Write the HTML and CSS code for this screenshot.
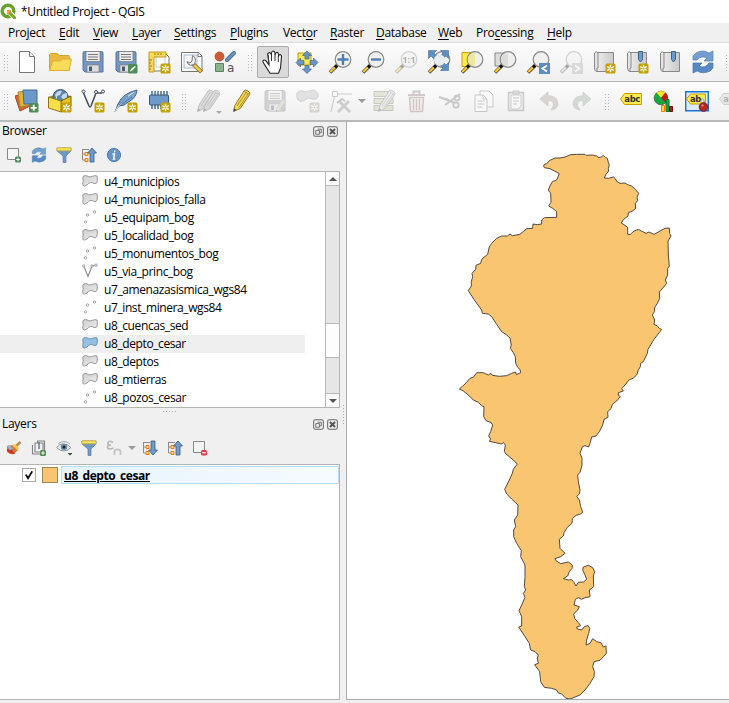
FILE: index.html
```html
<!DOCTYPE html>
<html lang="en">
<head>
<meta charset="utf-8">
<title>*Untitled Project - QGIS</title>
<link rel="stylesheet" href="styles.css">
</head>
<body>
<svg class="defs" width="0" height="0" aria-hidden="true">
  <defs>
    <linearGradient id="grey" x2="1" y2="1"><stop stop-color="#cfcfcf"/><stop offset="1" stop-color="#ededed"/></linearGradient>
    <linearGradient id="book" x2="1"><stop stop-color="#ededed"/><stop offset="1" stop-color="#c9c9c9"/></linearGradient>
    <symbol id="star" viewBox="0 0 11 11"><rect x=".5" y=".5" width="10" height="10" rx="1.500" fill="#c4a000"/><path d="M5.500 1.800v7.400M2.300 3.600l6.400 3.800M8.700 3.600L2.300 7.400" stroke="#fff" stroke-width="1.300"/><circle cx="5.500" cy="5.500" r="1" fill="#c4a000"/></symbol>
    <symbol id="lens" viewBox="0 0 24 24"><path d="M2 22.500l7-7" stroke="#444" stroke-width="3.600"/><path d="M2.300 22l5-5" stroke="#fcc92c" stroke-width="2.200"/><path d="M7 17.500l2.500-2.500" stroke="#111" stroke-width="3"/><circle cx="15" cy="9.500" r="7.800" fill="#eeeeec" fill-opacity=".9" stroke="#888a85" stroke-width="1.200"/></symbol>
    <symbol id="poly" viewBox="0 0 16 12"><path d="M.8 2Q1.500.5 3.500.6 5 .7 6.500 1.600q2 .6 4-.3 3-1.200 4.500-.3.800 3 0 6-.3 2-3 1.500-2-1.500-3.500-1-2 .5-3.500 2.500Q2 12 1 10.500.3 9 1.200 6 1 4 .8 2z" fill="url(#grey)" stroke="#999" stroke-width="1"/></symbol>
    <symbol id="polyb" viewBox="0 0 16 12"><path d="M.8 2Q1.500.5 3.500.6 5 .7 6.500 1.600q2 .6 4-.3 3-1.200 4.500-.3.800 3 0 6-.3 2-3 1.500-2-1.500-3.500-1-2 .5-3.500 2.500Q2 12 1 10.500.3 9 1.200 6 1 4 .8 2z" fill="#93bfe0" stroke="#6b93b5" stroke-width="1"/></symbol>
    <symbol id="pts" viewBox="0 0 16 16"><g fill="#fff" stroke="#999" stroke-width=".9"><circle cx="3.500" cy="12.800" r="1.200"/><circle cx="5.500" cy="6" r="1.200"/><circle cx="12.500" cy="3" r="1.200"/></g></symbol>
    <symbol id="line" viewBox="0 0 16 16"><path d="M2 3.500l4 10 4-10.500 4-.5" fill="none" stroke="#888" stroke-width="1.100"/><g fill="#fff" stroke="#888" stroke-width=".8"><circle cx="1.700" cy="3" r="1.200"/><circle cx="10" cy="3" r="1.200"/><circle cx="14" cy="2.200" r="1.200"/></g></symbol>
    <symbol id="reload" viewBox="0 0 24 24"><path d="M2 10V6l3-3q7-4 13 0l4-2v10h-9l3-3q-6-3-10 2z" fill="#729fcf" stroke="#5683b8" stroke-width=".7"/><path d="M22 13v5l-3 3q-7 3.500-13 0l-4 2V13h9l-3 3q6 3 10-3z" fill="#5888c2" stroke="#4676ac" stroke-width=".7"/></symbol>
    <symbol id="filter" viewBox="0 0 16 16"><path d="M1 1h14v3l-5 5v6.500H7V9L1 4z" fill="#6d97c4" stroke="#5c7fa5" stroke-width=".7"/><path d="M1 .8h14v3H1z" fill="#f5e45a" stroke="#c9ac2c" stroke-width=".7"/></symbol>
    <symbol id="tree" viewBox="0 0 16 16"><path d="M1 2.500h7M1.500 2v11h3M1.500 7h3" fill="none" stroke="#8a8a8a"/><path d="M4 5.500h3v3H4zM4 11.500h3v3H4z" fill="#ffd9a0" stroke="#f57900"/></symbol>
    <symbol id="float" viewBox="0 0 12 12"><rect x=".7" y=".7" width="10.600" height="10.600" rx="2" fill="none" stroke="#666" stroke-width="1.100"/><path d="M5 3.500h4v4H7.500M3 5h4v4H3z" fill="none" stroke="#666"/></symbol>
    <symbol id="close" viewBox="0 0 12 12"><rect x=".7" y=".7" width="10.600" height="10.600" rx="2" fill="none" stroke="#666" stroke-width="1.100"/><path d="M3.200 3.200l5.600 5.600M8.800 3.200L3.200 8.800" stroke="#555" stroke-width="2.200"/></symbol>
    <symbol id="bookbase" viewBox="0 0 24 24"><path d="M4.500 2.500h17v19h-17z" fill="url(#book)" stroke="#888"/><path d="M2.500 3Q4 .5 6 3v15H5v3.500q-2.500 0-2.500-3.500z" fill="#e4e4e4" stroke="#888"/></symbol>
    <symbol id="floppy" viewBox="0 0 24 24"><path d="M2 3q0-1.500 1.500-1.500h17Q22 1.500 22 3v19H4l-2-2z" fill="#7198c3" stroke="#55779c"/><path d="M5 1.500h14v10H5z" fill="#eee" stroke="#777" stroke-width=".7"/><path d="M7 4.500h10M7 7h10M7 9.500h10" stroke="#777"/><path d="M6 15h12v7H6z" fill="#ddd" stroke="#777" stroke-width=".6"/><path d="M8 16.500h3V21H8z" fill="#4a5b70"/></symbol>
    <symbol id="pencil" viewBox="0 0 24 24"><path d="M3.500 22.500l1.300-6L14 2q1-1.500 3-.5l2 1.200q1.500 1.300.7 2.800l-9.500 14z" fill="#f4d94e" stroke="#92772f"/><path d="M14.500 2.500l5 3M7 17L16 3.500M9 18.500L18 5" stroke="#a98b2e"/><path d="M3.500 22.500l.8-3 2 1.300z" fill="#333"/></symbol>
  </defs>
</svg>

<header class="titlebar">
  <svg width="17" height="17" viewBox="0 0 17 17"><circle cx="8" cy="8" r="5.800" fill="none" stroke="#6aa22b" stroke-width="3.600"/><path d="M8.500 8.500l6 6" stroke="#fff" stroke-width="5"/><path d="M7 7h4v2l5 5v2h-2.500L9 11.500H7z" fill="#78a82c"/><path d="M7 7h4l-2 4H7z" fill="#f39a33"/></svg>
  <span>*Untitled Project - QGIS</span>
</header>

<nav class="menubar">
  <span>Pro<u>j</u>ect</span><span><u>E</u>dit</span><span><u>V</u>iew</span><span><u>L</u>ayer</span><span><u>S</u>ettings</span><span><u>P</u>lugins</span><span>Vect<u>o</u>r</span><span><u>R</u>aster</span><span><u>D</u>atabase</span><span><u>W</u>eb</span><span>Pro<u>c</u>essing</span><span><u>H</u>elp</span>
</nav>

<section class="toolbar">
  <i class="grip"></i>
  <button><svg viewBox="0 0 24 24"><path d="M4.500 1.500h10l5 5v16h-15z" fill="#fff" stroke="#777"/><path d="M14.500 1.500v5h5" fill="#eee" stroke="#777"/></svg></button>
  <button><svg viewBox="0 0 24 24"><path d="M1.500 20V5q0-1 1-1.500h7l2 2h9q1 0 1 1V20z" fill="#e9b93e" stroke="#d4a430"/><path d="M1.500 20.500l3-9.500h8l2-2h9l-2.500 11.500z" fill="#fddb5a" stroke="#dcae35"/></svg></button>
  <button><svg viewBox="0 0 24 24"><use href="#floppy"/></svg></button>
  <button><svg viewBox="0 0 24 24"><use href="#floppy"/><rect x="14" y="14" width="9.500" height="9.500" rx="1.500" fill="#508b59"/><path d="M16 21.500l1-2.500 4-3 .8.800-3.500 3.800z" fill="#fff"/></svg></button>
  <button><svg viewBox="0 0 24 24"><path d="M5 3h13l4 4v14H5z" fill="#fff" stroke="#777"/><path d="M9 6h9v11H9z" fill="none" stroke="#bcd"/><path d="M2 2h17v5H7v15H2z" fill="#f7da59" stroke="#c09b20"/><path d="M2 10h3M2 13h2M2 16h3M2 19h2M8 5V3M11 5V3M14 5V3" stroke="#a67c00"/><use href="#star" x="13" y="13" width="11" height="11"/></svg></button>
  <button><svg viewBox="0 0 24 24"><path d="M1.500 2.500h17l3.500 3.500v15.500H1.500z" fill="#fff" stroke="#777"/><path d="M4 5h13v13H4z" fill="#f5f8fd" stroke="#a9bad0"/><path d="M18 3v3.500h4" fill="none" stroke="#777"/><path d="M12 13l9.500 9" stroke="#836b31" stroke-width="4.200"/><path d="M14 15l7 6.500" stroke="#f1cd46" stroke-width="2.500"/><path d="M12.500 5.500q3 1 3 5l-1 4-4 .8q-3-.5-3.500-3.800l3 1.500 2-2z" fill="#eee" stroke="#777"/></svg></button>
  <button><svg viewBox="0 0 24 24"><circle cx="6.500" cy="6.500" r="4.500" fill="#cf5a36" stroke="#9e4528" stroke-width=".7"/><path d="M14 10l7-7" stroke="#486b92" stroke-width="4" stroke-linecap="round"/><path d="M14 10l7-7" stroke="#6994c0" stroke-width="2.400" stroke-linecap="round"/><path d="M2.500 13.500h8v8h-8z" fill="#8db28e" stroke="#5d8060"/><text x="14" y="22" class="glyph">a</text></svg></button>
  <i class="grip"></i>
  <button class="pressed"><svg viewBox="0 0 24 24"><path d="M8 15L5 11q-2-1.700-3-.3-.5 1 1 3l4.500 7 1.500 2.500h8.500l2-5 1-12q-.5-2-2-1.500-1 .3-1 2V4q-.5-2-2-1.500T14 5V3q-.5-2.200-2-2t-1.500 2.500L10 4Q9 2 7.500 3T7 5z" fill="#fff" stroke="#222" stroke-width="1.100"/><path d="M7 5l1 9M10.500 4v7M14 4v7M17.300 6v6" stroke="#333" fill="none"/></svg></button>
  <button><svg viewBox="0 0 24 24"><path d="M3 3h13v12H3z" fill="#fce94f" stroke="#c4a000"/><g fill="#6895c5" stroke="#3d6895" stroke-width=".7"><path d="M12 1l4.500 4.500H14V9h-4V5.500H7.500zM12 23.500L7.500 19H10v-3.500h4V19h2.500zM1 12.500L5.500 8v2.500H9v4H5.500V17zM23 12.500L18.500 17v-2.500H15v-4h3.500V8z"/></g></svg></button>
  <button><svg viewBox="0 0 24 24"><use href="#lens"/><path d="M15 4v11M9.500 9.500h11" stroke="#4d7fb5" stroke-width="2.400"/></svg></button>
  <button><svg viewBox="0 0 24 24"><use href="#lens"/><path d="M10 9.500h10" stroke="#4d7fb5" stroke-width="2.400"/></svg></button>
  <button class="off"><svg viewBox="0 0 24 24"><use href="#lens"/><text x="8.200" y="13" class="one">1:1</text></svg></button>
  <button><svg viewBox="0 0 24 24"><use href="#lens"/><g fill="#5f8fc2" stroke="#456f9d" stroke-width=".6"><path d="M1.500.5h8L7 3l3 3-3 3-3-3-2.500 2.500zM21.500.5h-8L16 3l-2.500 3 2.500 3 3-3 2.500 2.500zM21.500 20.500h-8L16 18l-3-3 3-3 3 3 2.500-2.500z"/></g><circle cx="12.500" cy="10" r="5.500" fill="#e9ecef"/></svg></button>
  <button><svg viewBox="0 0 24 24"><path d="M2 2.500h11v14H2z" fill="#fce94f" stroke="#c4a000"/><use href="#lens"/><path d="M15 3.200v13q-6-.2-7-5t3-7z" fill="#efe7a0"/></svg></button>
  <button><svg viewBox="0 0 24 24"><path d="M2 3h11v13H2z" fill="#ddd" stroke="#888"/><use href="#lens"/><path d="M15 3.200v13q-6-.2-7-5t3-7z" fill="#ddd"/></svg></button>
  <button><svg viewBox="0 0 24 24"><use href="#lens"/><path d="M13 13h11v11H13z" fill="#5c8dbe"/><path d="M21 15.500l-4.500 3 4.500 3" fill="none" stroke="#fff" stroke-width="1.800"/></svg></button>
  <button class="off"><svg viewBox="0 0 24 24"><use href="#lens" class="sat0"/><path d="M13 13h11v11H13z" fill="#aaa"/><path d="M16 15.500l4.500 3-4.500 3" fill="none" stroke="#fff" stroke-width="1.800"/></svg></button>
  <button><svg viewBox="0 0 24 24"><use href="#bookbase"/><use href="#star" x="13" y="13" width="11" height="11"/></svg></button>
  <button><svg viewBox="0 0 24 24"><use href="#bookbase"/><path d="M13.500 1.500h4v8l-2 2.500-2-2.500z" fill="#6f9bcb" stroke="#38658f"/><use href="#star" x="13" y="13" width="11" height="11"/></svg></button>
  <button><svg viewBox="0 0 24 24"><use href="#bookbase"/><path d="M13.500 1.500h4v8l-2 2.500-2-2.500z" fill="#6f9bcb" stroke="#38658f"/></svg></button>
  <button><svg viewBox="0 0 24 24"><use href="#reload"/></svg></button>
  <i class="grip"></i>
</section>

<section class="toolbar second">
  <i class="grip"></i>
  <button><svg viewBox="0 0 24 24"><path d="M0 7l11-3 4 13-10 5z" fill="#d56630" stroke="#a4481d"/><path d="M3 3l12-1 2 14-12 2z" fill="#e3b32f" stroke="#a88428"/><path d="M8 1h14v14H9z" fill="#6b98c8" stroke="#426d99"/><rect x="14" y="14" width="9.500" height="9.500" rx="1.500" fill="#508b59"/><path d="M18.700 15.800v6M15.700 18.800h6" stroke="#fff" stroke-width="1.700"/></svg></button>
  <button><svg viewBox="0 0 24 24"><path d="M0 8l10-3 13 2-8 6z" fill="#a88c14"/><circle cx="12.500" cy="8" r="7.500" fill="#5e85ae" stroke="#3c5878"/><path d="M7 6q3-5 7-4l-2 4-3 1v4zM15 5l4-1v5l-3 2-3-3z" fill="#c8dae9"/><path d="M13 12l10-5v10l-10 6z" fill="#e5c51f" stroke="#725d00"/><path d="M.5 8L13 12v11L.5 19z" fill="#f9de4b" stroke="#8e7616"/><use href="#star" x="13" y="13" width="11" height="11"/></svg></button>
  <button><svg viewBox="0 0 24 24"><path d="M2.500 4l5.500 13q1 2 2 0L15 4h6" fill="none" stroke="#3c4c5c" stroke-width="1.500"/><g fill="#fff" stroke="#3c4c5c"><circle cx="2.500" cy="2.500" r="1.500"/><circle cx="15" cy="3" r="1.500"/><circle cx="22" cy="2.500" r="1.500"/></g><use href="#star" x="13" y="13" width="11" height="11"/></svg></button>
  <button><svg viewBox="0 0 24 24"><path d="M1 23l3-8Q9 4 23 1q-.5 7-7 11l-6 4-5 1z" fill="#7aa5d2" stroke="#42648a"/><path d="M1 23Q6 12 20 3" fill="none" stroke="#e2edf7"/><path d="M5 16l9-9M8 15l10-7" stroke="#466f9b" stroke-width=".8"/><use href="#star" x="13" y="13" width="11" height="11"/></svg></button>
  <button><svg viewBox="0 0 24 24"><path d="M5 2v18M8 2v18M11 2v18M14 2v18M17 2v18M20 2v18" stroke="#34587b" stroke-width="1.300"/><rect x="2.500" y="6" width="19" height="10" rx="1" fill="#6d9aca" stroke="#34587b"/><use href="#star" x="13" y="13" width="11" height="11"/></svg></button>
  <i class="grip wide"></i>
  <button class="off grey"><svg viewBox="0 0 24 24"><g class="solid"><use href="#pencil" x="-3"/><use href="#pencil" x="3"/></g></svg><b class="tick"></b></button>
  <button><svg viewBox="0 0 24 24"><use href="#pencil"/></svg></button>
  <button class="off grey"><svg viewBox="0 0 24 24"><use href="#floppy"/><use href="#pencil" x="11" y="9" width="14" height="15"/></svg></button>
  <button class="off grey"><svg viewBox="0 0 24 24"><path d="M1 4q2-4 8-1 3-1 8-2 6 2 5 7-1 3-6 2-4-2-6 0-4 4-8 1-2-3-1-7z" fill="#bbb" stroke="#888"/><use href="#star" x="13" y="13" width="11" height="11"/></svg></button>
  <button class="off grey"><svg viewBox="0 0 24 24"><path d="M2 23L6 5h17" fill="none" stroke="#777"/><path d="M3.500 2.500h5v5h-5z" fill="#fff" stroke="#777"/><path d="M9 23l11-11M10 12l11 11" stroke="#888" stroke-width="3"/><path d="M8 14l5-4 3 2" fill="none" stroke="#777" stroke-width="2"/></svg></button>
  <i class="drop"></i>
  <button class="off"><svg viewBox="0 0 24 24"><path d="M2 2.500h19v5H2zM2 9.500h19v5H2zM2 16.500h19v5H2z" fill="#c7c79d" stroke="#76765c"/><use href="#pencil" x="3" y="0" class="sat0"/></svg></button>
  <button class="off"><svg viewBox="0 0 24 24"><path d="M3 6h17M8.500 5V2.500h6V5" fill="none" stroke="#927070" stroke-width="2"/><path d="M4.500 8.500h14l-1 14h-12z" fill="#eee0dc" stroke="#927070" stroke-width="1.500"/><path d="M8.500 10v11M11.500 10v11M14.500 10v11" stroke="#927070" stroke-width="1.300"/></svg></button>
  <button class="off"><svg viewBox="0 0 24 24"><path d="M1 8l16 6M7 16L22 5M1 8l10 3" fill="none" stroke="#777" stroke-width="2"/><circle cx="19" cy="9" r="2.500" fill="none" stroke="#777" stroke-width="1.800"/><circle cx="18" cy="16" r="2.700" fill="none" stroke="#777" stroke-width="1.800"/></svg></button>
  <button class="off"><svg viewBox="0 0 24 24"><path d="M9 2h9l4 4v12H9z" fill="#fff" stroke="#777"/><path d="M4 6h8l4 4v12.500H4z" fill="#fff" stroke="#777"/><path d="M12 6v4h4M6.500 12h7M6.500 15h7M6.500 18h5" fill="none" stroke="#777"/></svg></button>
  <button class="off"><svg viewBox="0 0 24 24"><path d="M4.500 3.500h15v18h-15z" fill="#ddd" stroke="#777" stroke-width="1.400"/><path d="M7 6h10v11l-3 3H7z" fill="#fff" stroke="#888"/><path d="M9 2h6v3H9z" fill="#aaa" stroke="#777"/><path d="M9 9h6M9 12h6M9 15h4" stroke="#777"/></svg></button>
  <button class="off"><svg viewBox="0 0 24 24"><path d="M3 10l8-7v4q9-1 10 8-.5 5-7 6 4-5 2-8-2-2-5-1.500V17z" fill="#a69989" stroke="#887e70" stroke-width=".8"/></svg></button>
  <button class="off"><svg viewBox="0 0 24 24"><path d="M21 10l-8-7v4q-9-1-10 8 .5 5 7 6-4-5-2-8 2-2 5-1.500V17z" fill="#97a69a" stroke="#788a7b" stroke-width=".8"/></svg></button>
  <i class="grip narrow"></i>
  <button><svg viewBox="0 0 24 24"><path d="M1.500 10l4-5.500h17v11h-17z" fill="#fce94f" stroke="#c4a000"/><text x="5.300" y="13" class="abc">abc</text></svg></button>
  <button><svg viewBox="0 0 24 24"><circle cx="9" cy="9" r="6.800" fill="#0faa42" stroke="#3d3b20" stroke-width=".6"/><path d="M9 9L4.500 3.500Q9 .5 13.500 3.500z" fill="#fce51b"/><path d="M9 9l4.500-5.500q4 5 .5 10.500z" fill="#c81919"/><path d="M9.500 16.500h3v6h-3z" fill="#fce51b" stroke="#f57900"/><path d="M14 10.500h3v12h-3z" fill="#16a34a" stroke="#087b2b"/><path d="M17.500 17.500h3v5h-3z" fill="#b61a1a" stroke="#750b0b"/></svg></button>
  <button><svg viewBox="0 0 24 24"><path d="M.7 2.700h22.600v19H.7z" fill="#dcebfa" stroke="#1a73d8" stroke-width="1.400"/><path d="M1.500 10l4-5h15v10h-15z" fill="#fce94f" stroke="#c4a000"/><text x="5" y="13" class="abc">ab</text><path d="M16 18v-7q1-2 3 0v7" fill="#eee" stroke="#999"/><circle cx="18.500" cy="18" r="4.300" fill="#b42828" stroke="#7c1616"/><circle cx="17.500" cy="16.500" r="1.200" fill="#d77"/></svg></button>
  <button class="off"><svg viewBox="0 0 24 24"><path d="M1.500 10l4-5.500h17v11h-17z" fill="#ccc" stroke="#888"/><text x="5.300" y="13" class="abc">ab</text></svg></button>
</section>

<main class="workspace">
  <div class="docks">
    <section class="dock browser">
      <h2 class="dock-title"><span>Browser</span><svg viewBox="0 0 12 12"><use href="#float"/></svg><svg viewBox="0 0 12 12"><use href="#close"/></svg></h2>
      <div class="dock-tools">
        <svg viewBox="0 0 16 16"><path d="M1.500 1.500h11v11h-11z" fill="#f6f6f6" stroke="#888"/><rect x="9" y="9.500" width="6" height="6" rx="1.500" fill="#508b59"/><path d="M12 10.700v3.600M10.200 12.500h3.600" stroke="#fff"/></svg>
        <svg viewBox="0 0 24 24"><use href="#reload"/></svg>
        <svg viewBox="0 0 16 16"><use href="#filter"/></svg>
        <svg viewBox="0 0 16 16"><use href="#tree"/><path d="M11 1l4.500 5H13v9H9V6H6.500z" fill="#6f9aca" stroke="#345c86" stroke-width=".8"/></svg>
        <svg viewBox="0 0 16 16"><circle cx="8" cy="8" r="6.600" fill="#6695c6" stroke="#507cae"/><path d="M8.700 3.500v1.800M6.500 7h2l-1 5h1.700" fill="none" stroke="#fff" stroke-width="1.500"/></svg>
      </div>
      <div class="tree-frame">
        <ul class="tree">
          <li><svg class="shape"><use href="#poly"/></svg>u4_municipios</li>
          <li><svg class="shape"><use href="#poly"/></svg>u4_municipios_falla</li>
          <li><svg class="marks"><use href="#pts"/></svg>u5_equipam_bog</li>
          <li><svg class="shape"><use href="#poly"/></svg>u5_localidad_bog</li>
          <li><svg class="marks"><use href="#pts"/></svg>u5_monumentos_bog</li>
          <li><svg class="marks"><use href="#line"/></svg>u5_via_princ_bog</li>
          <li><svg class="shape"><use href="#poly"/></svg>u7_amenazasismica_wgs84</li>
          <li><svg class="marks"><use href="#pts"/></svg>u7_inst_minera_wgs84</li>
          <li><svg class="shape"><use href="#poly"/></svg>u8_cuencas_sed</li>
          <li class="selected"><svg class="shape"><use href="#polyb"/></svg>u8_depto_cesar</li>
          <li><svg class="shape"><use href="#poly"/></svg>u8_deptos</li>
          <li><svg class="shape"><use href="#poly"/></svg>u8_mtierras</li>
          <li><svg class="marks"><use href="#pts"/></svg>u8_pozos_cesar</li>
        </ul>
        <div class="scroll"><i class="up"></i><b class="track"></b><b class="thumb"></b><b class="track rest"></b><i class="down"></i></div>
      </div>
    </section>
    <div class="split-h"></div>
    <section class="dock layers">
      <h2 class="dock-title"><span>Layers</span><svg viewBox="0 0 12 12"><use href="#float"/></svg><svg viewBox="0 0 12 12"><use href="#close"/></svg></h2>
      <div class="dock-tools">
        <svg viewBox="0 0 16 16"><path d="M9 7l5.500-5" stroke="#b78e42" stroke-width="2.500"/><path d="M1 6l5-1 6 5-4 4q-4 1-7-2z" fill="#e7742d"/><path d="M1 9l5 1 3 4q-5 0-8-3z" fill="#bf3636"/><path d="M6 5l3-1 4 4-2 2z" fill="#f5c953"/><path d="M1 6l3-.5 3 3-3 2z" fill="#8fb2d6"/></svg>
        <svg viewBox="0 0 16 16"><path d="M1.500 5v9h9M4 3v9h8V3zM6.500 3v-2h7v9" fill="none" stroke="#828282" stroke-width="1.100"/><path d="M8 9V2" stroke="#4c77a3" stroke-width="1.400"/><rect x="9" y="10" width="6" height="6" rx="1.500" fill="#508b59"/><path d="M12 11.200v3.600M10.200 13h3.600" stroke="#fff"/></svg>
        <svg viewBox="0 0 16 16"><path d="M.5 7.500Q7 0 15 7.500 7.500 14.500.5 7.500z" fill="#ececec" stroke="#999"/><circle cx="8" cy="7" r="3.300" fill="#6b90b8"/><circle cx="8" cy="7" r="1.600" fill="#222"/><path d="M2 4q6-5 12 0" fill="none" stroke="#aaa"/><path d="M11.500 13h5L14 15.500z" fill="#444"/></svg>
        <svg viewBox="0 0 16 16"><use href="#filter"/></svg>
        <svg class="faded" viewBox="0 0 16 16"><path d="M7 2.500Q3 0 2 2.500T5 5Q1 5 1.500 7.500T7.500 8" fill="none" stroke="#aaa" stroke-width="1.700"/><path d="M8.500 15V11.500q0-2 3-2t3 2V15" fill="none" stroke="#bbb" stroke-width="2"/></svg>
        <i class="drop"></i>
        <svg viewBox="0 0 16 16"><use href="#tree"/><path d="M11 15l-4.500-5H9V1h4v9h2.500z" fill="#6f9aca" stroke="#345c86" stroke-width=".8"/></svg>
        <svg viewBox="0 0 16 16"><use href="#tree"/><path d="M11 1l4.500 5H13v9H9V6H6.500z" fill="#6f9aca" stroke="#345c86" stroke-width=".8"/></svg>
        <svg viewBox="0 0 16 16"><path d="M1.500 1.500h11v11h-11z" fill="#f3f3f3" stroke="#888"/><rect x="9" y="10" width="6" height="5.500" rx="1.500" fill="#e63946"/><path d="M10.200 12.700h3.600" stroke="#fff" stroke-width="1.200"/></svg>
      </div>
      <div class="layer-frame">
        <div class="layer"><span class="check"><svg viewBox="0 0 13 13"><path d="M3 6l2.500 4L10 2.500" fill="none" stroke="#111" stroke-width="1.900"/></svg></span><span class="swatch"></span><span class="layer-name"><span>u8_depto_cesar</span></span></div>
      </div>
    </section>
  </div>
  <div class="split-v"></div>
  <section class="map">
    <svg viewBox="-309 -54 1146 1731"><path class="region" d="M281 78L283 73 290 71 300 61 315 54 330 54 345 51 362 44 380 43 405 43 408 46 428 45 440 48 447 53 455 50 460 46 466 52 472 55 475 67 478 75 475 85 476 93 468 103 463 114 475 115 490 111 496 116 500 124 510 130 525 129 533 134 545 138 556 148 566 160 561 172 563 182 556 190 557 205 548 213 535 218 534 228 520 239 514 249 525 256 533 262 533 283 540 284 552 273 565 268 574 273 588 280 597 276 612 283 630 273 645 265 658 264 659 280 663 288 654 303 655 345 658 378 653 385 653 405 646 420 650 430 641 441 628 456 629 475 622 490 614 503 613 515 607 525 614 540 612 553 622 558 628 565 635 568 612 598 594 628 592 640 580 665 572 670 571 680 565 690 560 705 550 714 537 720 525 735 515 746 520 753 505 758 505 766 511 770 500 783 487 793 483 806 473 815 474 832 462 838 458 855 448 875 438 888 425 891 420 910 416 921 405 917 397 920 390 940 396 955 396 975 390 997 383 1005 385 1025 390 1050 388 1062 380 1069 388 1080 392 1100 398 1116 392 1122 378 1126 367 1136 366 1150 352 1162 342 1178 340 1188 328 1198 330 1225 345 1240 332 1250 315 1256 318 1262 332 1271 355 1266 367 1275 366 1285 358 1295 353 1308 340 1316 355 1320 365 1319 372 1327 378 1338 385 1327 400 1326 410 1318 405 1305 398 1290 400 1281 415 1276 428 1283 434 1295 430 1308 431 1340 418 1350 420 1370 405 1373 395 1378 385 1373 376 1378 372 1395 388 1400 383 1410 371 1422 374 1435 385 1448 392 1457 380 1461 382 1467 395 1470 402 1461 414 1456 419 1465 416 1480 410 1500 408 1515 420 1510 428 1496 440 1505 453 1508 460 1521 468 1518 469 1540 460 1550 450 1561 432 1565 428 1580 433 1595 432 1610 420 1630 405 1650 390 1665 370 1673 360 1677 348 1675 335 1662 325 1659 320 1650 305 1645 283 1642 272 1625 269 1595 258 1580 254 1574 265 1570 262 1555 265 1545 255 1535 242 1530 238 1510 225 1490 212 1470 206 1461 215 1458 215 1430 207 1412 215 1395 225 1372 220 1360 227 1350 223 1340 225 1310 225 1275 212 1250 214 1232 200 1210 191 1190 191 1170 197 1160 193 1140 203 1125 204 1095 185 1077 170 1062 164 1048 178 1020 187 1000 190 988 202 972 190 960 168 942 163 935 166 915 160 907 155 912 118 904 122 897 116 888 122 875 128 855 124 848 108 842 101 830 102 800 95 797 85 787 70 780 55 765 40 753 28 747 45 732 60 715 70 712 80 698 100 698 115 705 123 700 127 706 148 709 170 707 185 700 197 696 199 704 212 698 210 688 203 682 197 670 196 650 190 638 181 625 184 615 180 594 170 585 155 575 140 553 125 530 115 522 97 520 95 510 75 483 55 452 64 438 64 425 68 410 66 400 77 388 78 376 92 370 95 358 113 343 118 320 125 310 140 295 155 288 172 288 180 282 187 287 210 283 230 266 248 265 249 252 262 254 275 252 275 240 283 233 320 232 320 215 308 205 296 198 303 187 302 160 295 150 300 138 307 125 320 120 328 101 315 94 300 86 283 83z"/></svg>
  </section>
</main>
</body>
</html>
```
FILE: styles.css
```css
* { box-sizing: border-box; }
body { margin: 0; width: 729px; height: 703px; overflow: hidden; background: #f0f0f0; color: #000; font: 12px/18px "Open Sans", "Noto Sans", sans-serif; letter-spacing: -0.28px; display: flex; flex-direction: column; }
.defs { position: absolute; }
svg { display: block; flex: none; }
.titlebar { height: 23px; flex: none; background: #fff; display: flex; align-items: center; gap: 4px; }
.titlebar span { letter-spacing: -0.34px; }
.menubar { height: 20px; flex: none; display: grid; grid-template-columns: 51px 34px 39px 42px 56px 53px 47px 46px 62px 38px 71px 60px; padding-left: 8px; align-items: center; border-bottom: 1px solid #dcdcdc; white-space: nowrap; line-height: 19px; }
.menubar u { text-decoration-thickness: 1px; text-underline-offset: 2px; }

.toolbar { height: 39px; flex: none; display: flex; align-items: center; border-bottom: 1px solid #b4b4b4; background: linear-gradient(#fcfcfc, #efefef); overflow: hidden; }
.toolbar.second { height: 40px; border-bottom: 2px solid #b9b9b9; }
.toolbar button { width: 33px; height: 32px; flex: none; padding: 0; border: 0; background: none; display: flex; align-items: center; justify-content: center; position: relative; }
.toolbar button svg { width: 24px; height: 24px; }
.toolbar .pressed { border: 1px solid #aaa; border-radius: 2px; background: #dadada; width: 32px; margin-right: 1px; }
.grip { width: 16px; height: 17px; flex: none; background: radial-gradient(circle, #bbb 0.7px, transparent 0.8px) 0 0 / 3px 3px; background-clip: content-box; padding: 0 5px 0 6px; }
.grip:first-child { width: 10px; padding: 0 2px 0 3px; }
.grip.wide { width: 17px; padding-left: 7px; }
.grip.narrow { width: 16px; padding-left: 7px; }
.off svg { opacity: .35; }
.grey svg { filter: grayscale(.85); }
.sat0 { filter: grayscale(1); }
.solid { filter: grayscale(.9) brightness(.8); }
.tick { position: absolute; right: 3px; bottom: 3px; border: 3px solid transparent; border-top-color: #aaa; border-bottom: 0; }
.drop { width: 10px; flex: none; display: flex; justify-content: center; }
.drop::before { content: ""; border: 4px solid transparent; border-top-color: #999; border-bottom: 0; }
.glyph { font: 12px "DejaVu Sans", sans-serif; fill: #555; }
.one { font: bold 9.500px "Open Sans", sans-serif; fill: #333; }
.abc { font: bold 8.500px "DejaVu Sans", sans-serif; fill: #333; letter-spacing: -.4px; }
.faded { opacity: .8; }

.workspace { flex: 1; min-height: 0; display: flex; }
.docks { width: 340px; flex: none; display: flex; flex-direction: column; }
.dock { display: flex; flex-direction: column; }
.browser { height: 286px; }
.dock-title { margin: 0; height: 18px; padding: 0 2px; font: inherit; display: flex; align-items: center; gap: 3px; }
.dock-title span { flex: 1; }
.dock-title svg { width: 11px; height: 11px; }
.dock-tools { height: 31px; display: flex; align-items: center; gap: 9px; padding: 0 6px 1px; }
.dock-tools svg { width: 16px; height: 16px; }
.dock-tools .drop { margin: 0 -4px 0 -4px; }
.tree-frame { flex: 1; min-height: 0; border: 1px solid #b4b4b4; border-left: 0; background: #fff; display: flex; }
.tree { flex: 1; margin: 0; padding: 1px 20px 0 0; list-style: none; overflow: hidden; letter-spacing: -0.4px; }
.tree li { height: 18px; padding-left: 82px; display: flex; align-items: center; gap: 6px; white-space: nowrap; }
.tree svg { width: 16px; height: 16px; }
.tree .shape { height: 12px; margin-bottom: 3px; }
.tree .marks { margin-bottom: 2px; }
.selected { background: #efefef; }
.scroll { width: 14px; border-left: 1px solid #b8b8b8; background: #e6e6e6; display: flex; flex-direction: column; }
.scroll i { height: 14px; background: #fbfbfb; display: flex; align-items: center; justify-content: center; }
.scroll i::before { content: ""; border: 4px solid transparent; }
.up { border-bottom: 1px solid #b8b8b8; }
.down { border-top: 1px solid #b8b8b8; }
.scroll .up::before { border-bottom-color: #555; border-top: 0; }
.scroll .down::before { border-top-color: #555; border-bottom: 0; }
.track { height: 137px; }
.thumb { height: 35px; background: #fdfdfd; border: solid #b8b8b8; border-width: 1px 0; }
.rest { height: auto; flex: 1; }
.split-h { height: 7px; flex: none; background: radial-gradient(circle, #aaa .7px, transparent .8px) 162px 2px / 3px 3px; clip-path: inset(2px 162px 2px 162px); }
.layers { flex: 1; min-height: 0; }
.layer-frame { flex: 1; border: 1px solid #b4b4b4; border-left: 0; background: #fff; margin-bottom: 3px; }
.layer { height: 19px; display: flex; align-items: center; padding-left: 22px; }
.check { width: 14px; height: 14px; border: 1px solid #aaa; background: #fff; }
.check svg { width: 12px; height: 12px; }
.swatch { width: 16px; height: 16px; margin: 0 3px 0 6px; background: #f9c570; border: 1px solid #a58450; }
.layer-name { flex: 1; height: 18px; border: 1px solid #b9dcf3; background: linear-gradient(90deg, #e6f3fc, #f6fbff); padding-left: 2px; line-height: 17px; font-weight: bold; letter-spacing: -.4px; text-decoration: underline; }
.split-v { width: 6px; flex: none; background: radial-gradient(circle, #aaa .7px, transparent .8px) 2px 0 / 3px 3px; clip-path: inset(282px 1px 279px 2px); }
.map { flex: 1; min-width: 0; margin-bottom: 3px; background: #fff; border-left: 1px solid #aaa; border-bottom: 1px solid #aaa; }
.map svg { width: 382px; height: 577px; }
.region { fill: #f9c570; stroke: #514a40; stroke-width: 3; stroke-linejoin: round; }
```
